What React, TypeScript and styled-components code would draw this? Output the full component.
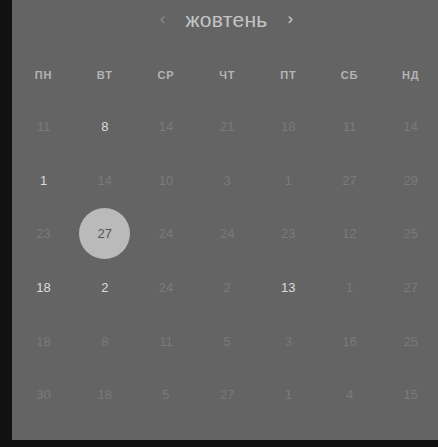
import React from "react";
import styled, { createGlobalStyle } from "styled-components";

const Global = createGlobalStyle`
  html, body { margin: 0; padding: 0; background: #111111; overflow: hidden; }
  body { font-family: "Liberation Sans", Arial, sans-serif; }
`;

const Page = styled.div`
  display: flex;
  height: 447px;
  background: #111111;
`;

const Panel = styled.div`
  margin-left: 12px;
  width: 426px;
  height: 440px;
  background: #646464;
  display: flex;
  flex-direction: column;
`;

const Header = styled.div`
  height: 40px;
  display: flex;
  align-items: center;
  justify-content: center;
  gap: 20px;
  padding-left: 3px;
`;

const Chevron = styled.span<{ $dim?: boolean }>`
  font-size: 17px;
  color: ${(p) => (p.$dim ? "#8a8a8a" : "#cfcfcf")};
  line-height: 1;
  margin-top: -4px;
`;

const Month = styled.span`
  font-size: 21px;
  color: #c4c4c4;
  letter-spacing: 0.3px;
`;

const Weekdays = styled.div`
  margin-top: 20px;
  margin-left: 1px;
  height: 30px;
  display: grid;
  grid-template-columns: repeat(7, 61.2px);
  align-items: center;
`;

const Weekday = styled.span`
  text-align: center;
  font-size: 11px;
  font-weight: 700;
  color: #b4b4b4;
  letter-spacing: 0.8px;
`;

const Days = styled.div`
  margin-top: 10px;
  margin-left: 1px;
  display: grid;
  grid-template-columns: repeat(7, 61.2px);
  grid-auto-rows: 53.6px;
`;

const Cell = styled.div`
  display: flex;
  align-items: center;
  justify-content: center;
`;

const Day = styled.span<{ $tone: "dim" | "bright" | "sel" }>`
  display: flex;
  align-items: center;
  justify-content: center;
  width: 51px;
  height: 51px;
  border-radius: 50%;
  font-size: 13px;
  background: ${(p) => (p.$tone === "sel" ? "#bababa" : "transparent")};
  color: ${(p) =>
    p.$tone === "sel" ? "#555555" : p.$tone === "bright" ? "#dcdcdc" : "#7a7a7a"};
`;

const weekdays = ["пн", "вт", "ср", "чт", "пт", "сб", "нд"];

type Tone = "dim" | "bright" | "sel";
const rows: [number, Tone][][] = [
  [[11, "dim"], [8, "bright"], [14, "dim"], [21, "dim"], [18, "dim"], [11, "dim"], [14, "dim"]],
  [[1, "bright"], [14, "dim"], [10, "dim"], [3, "dim"], [1, "dim"], [27, "dim"], [29, "dim"]],
  [[23, "dim"], [27, "sel"], [24, "dim"], [24, "dim"], [23, "dim"], [12, "dim"], [25, "dim"]],
  [[18, "bright"], [2, "bright"], [24, "dim"], [2, "dim"], [13, "bright"], [1, "dim"], [27, "dim"]],
  [[18, "dim"], [8, "dim"], [11, "dim"], [5, "dim"], [3, "dim"], [16, "dim"], [25, "dim"]],
  [[30, "dim"], [18, "dim"], [5, "dim"], [27, "dim"], [1, "dim"], [4, "dim"], [15, "dim"]],
];

export default function App() {
  return (
    <>
      <Global />
      <Page>
        <Panel>
          <Header>
            <Chevron $dim>‹</Chevron>
            <Month>жовтень</Month>
            <Chevron>›</Chevron>
          </Header>
          <Weekdays>
            {weekdays.map((w) => (
              <Weekday key={w}>{w.toUpperCase()}</Weekday>
            ))}
          </Weekdays>
          <Days>
            {rows.flat().map(([n, t], i) => (
              <Cell key={i}>
                <Day $tone={t}>{n}</Day>
              </Cell>
            ))}
          </Days>
        </Panel>
      </Page>
    </>
  );
}
